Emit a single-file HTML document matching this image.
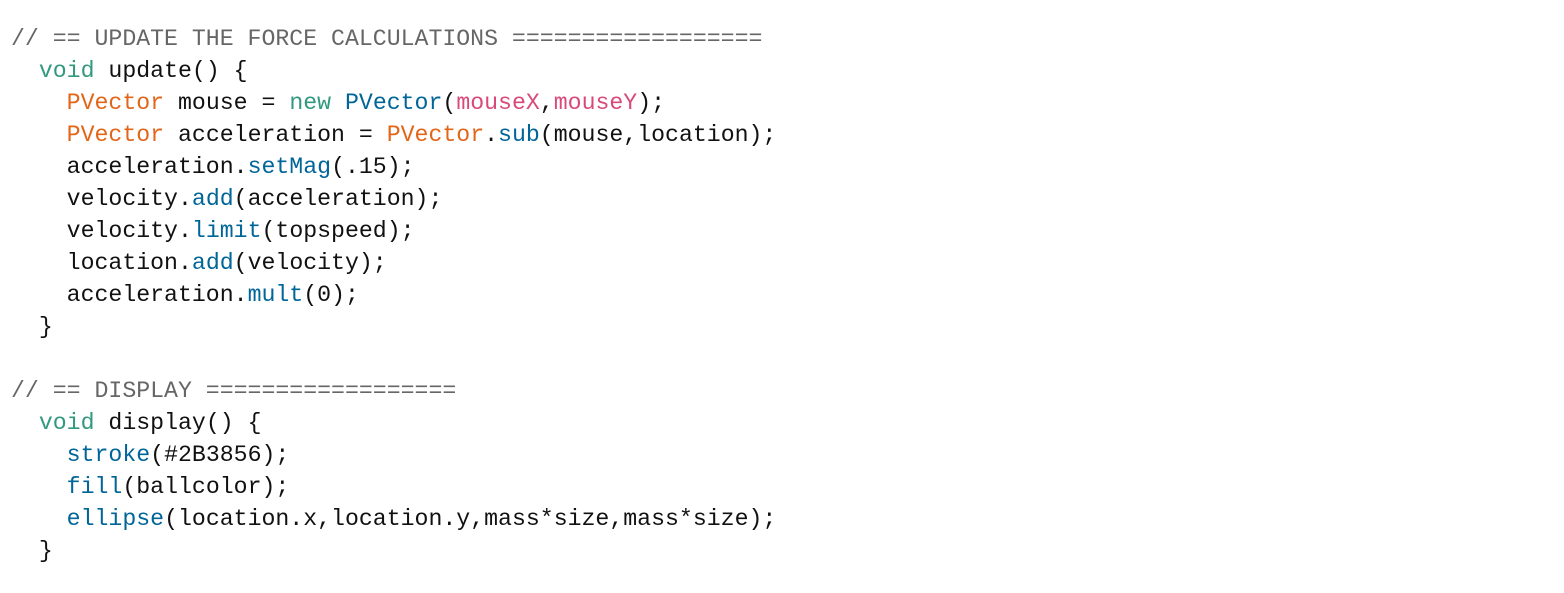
<!DOCTYPE html>
<html><head><meta charset="utf-8"><style>
html,body{margin:0;padding:0;background:#fff;width:1564px;height:593px;overflow:hidden}
pre{margin:0;position:absolute;left:11px;top:23px;font-family:"Liberation Mono","DejaVu Sans Mono",monospace;font-size:23.2px;line-height:32px;color:#111}
.c{color:#666}.g{color:#33997e}.o{color:#e2661a}.p{color:#d94a7a}.b{color:#006699}
</style></head><body>
<pre><span class="c">// == UPDATE THE FORCE CALCULATIONS ==================</span>
  <span class="g">void</span> update() {
    <span class="o">PVector</span> mouse = <span class="g">new</span> <span class="b">PVector</span>(<span class="p">mouseX</span>,<span class="p">mouseY</span>);
    <span class="o">PVector</span> acceleration = <span class="o">PVector</span>.<span class="b">sub</span>(mouse,location);
    acceleration.<span class="b">setMag</span>(.15);
    velocity.<span class="b">add</span>(acceleration);
    velocity.<span class="b">limit</span>(topspeed);
    location.<span class="b">add</span>(velocity);
    acceleration.<span class="b">mult</span>(0);
  }

<span class="c">// == DISPLAY ==================</span>
  <span class="g">void</span> display() {
    <span class="b">stroke</span>(#2B3856);
    <span class="b">fill</span>(ballcolor);
    <span class="b">ellipse</span>(location.x,location.y,mass*size,mass*size);
  }
</pre>
</body></html>
